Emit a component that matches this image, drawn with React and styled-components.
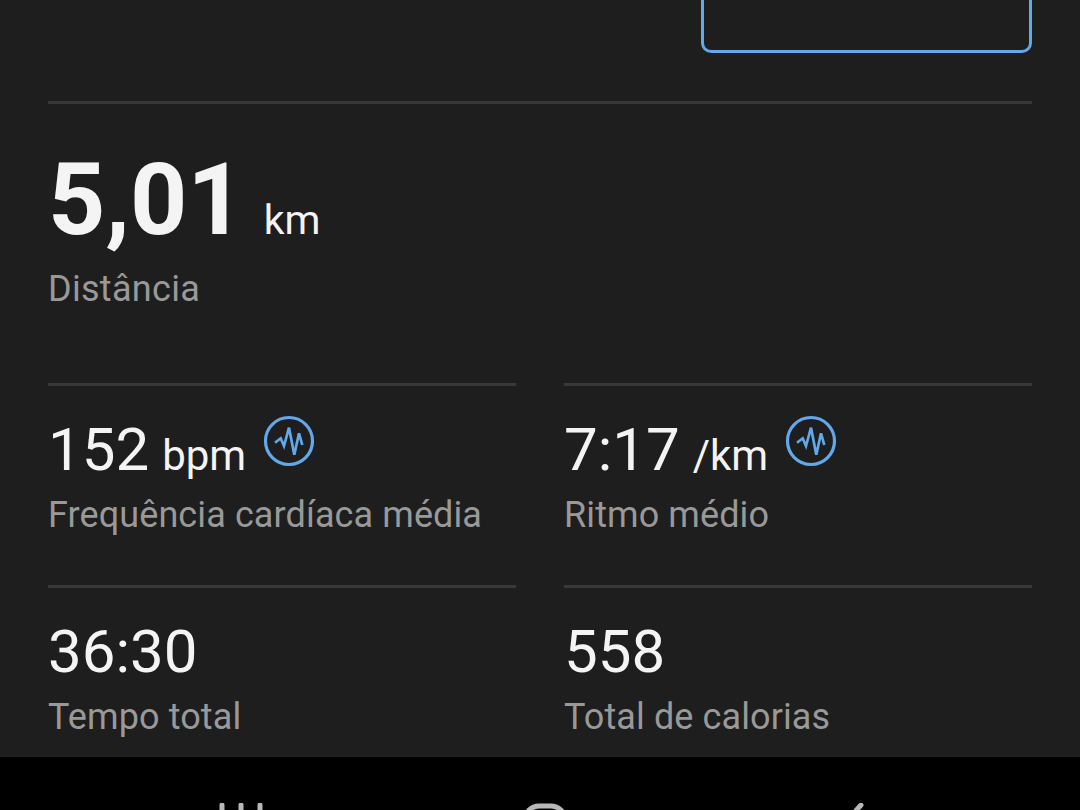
import React from "react";
import styled, { createGlobalStyle } from "styled-components";

const GlobalStyle = createGlobalStyle`
  html, body {
    margin: 0;
    padding: 0;
    background: #000;
  }
`;

const Screen = styled.div`
  width: 1080px;
  height: 810px;
  overflow: hidden;
  display: flex;
  flex-direction: column;
  background: #1e1e1e;
  font-family: Roboto, "Liberation Sans", sans-serif;
`;

const Content = styled.main`
  flex: 1;
  min-height: 0;
  overflow: hidden;
  padding: 0 48px;
`;

const TopRow = styled.div`
  display: flex;
  justify-content: flex-end;
  margin-bottom: 48px;
`;

const OutlineButton = styled.div`
  width: 331px;
  height: 53px;
  box-sizing: border-box;
  border: 3px solid #62a8ea;
  border-top: none;
  border-radius: 0 0 10px 10px;
`;

const Divider = styled.div`
  height: 3px;
  background: #383838;
`;

const Hero = styled.section`
  margin-top: 48px;
  padding-bottom: 73px;
`;

const HeroValue = styled.div`
  display: flex;
  align-items: baseline;
  gap: 19px;
  height: 96px;
  line-height: 96px;
  color: #f4f4f4;
`;

const BigNumber = styled.span`
  font-size: 100px;
  font-weight: 700;
`;

const Unit = styled.span`
  font-size: 41px;
  color: #f4f4f4;
`;

const Label = styled.div`
  font-size: 36px;
  letter-spacing: 0.1px;
  line-height: 42px;
  color: #999;
  white-space: nowrap;
`;

const HeroLabel = styled(Label)`
  margin-top: 20px;
  letter-spacing: 0.3px;
`;

const StatGrid = styled.section`
  display: grid;
  grid-template-columns: 468px 468px;
  column-gap: 48px;
`;

const Stat = styled.div`
  height: 199px;
  box-sizing: border-box;
  padding-top: 30px;
`;

const StatValue = styled.div`
  display: flex;
  align-items: baseline;
  height: 68px;
  line-height: 68px;
  margin-bottom: 10px;
  color: #f4f4f4;
`;

const Number = styled.span`
  font-size: 60px;
`;

const StatUnit = styled.span`
  font-size: 42px;
  margin-left: 13px;
`;

const Badge = styled.svg`
  width: 52px;
  height: 52px;
  margin-left: 16.5px;
  align-self: flex-start;
  margin-top: -1px;
`;

const NavBar = styled.nav`
  height: 53px;
  flex-shrink: 0;
  overflow: hidden;
  background: #000;
  position: relative;
`;

const NavIcon = styled.svg`
  position: absolute;
  top: 46px;
  left: ${(p) => p.$left}px;
  width: 60px;
  height: 60px;
  fill: none;
  stroke: #b8b8b8;
  stroke-width: 5;
  stroke-linecap: round;
`;

function PulseBadge() {
  return (
    <Badge viewBox="0 0 52 52">
      <circle cx="26" cy="26" r="23.5" fill="none" stroke="#62a8ea" strokeWidth="3.2" />
      <path
        d="M12 27.7 L17.7 23.3 L21 31 L26 12.7 L31.3 39.7 L36 18.3 L39.3 30"
        fill="none"
        stroke="#62a8ea"
        strokeWidth="2.7"
        strokeLinejoin="miter"
      />
    </Badge>
  );
}

const stats = [
  { value: "152", unit: "bpm", label: "Frequência cardíaca média", badge: true },
  { value: "7:17", unit: "/km", label: "Ritmo médio", badge: true },
  { value: "36:30", label: "Tempo total" },
  { value: "558", label: "Total de calorias" },
];

export default function App() {
  return (
    <Screen>
      <GlobalStyle />
      <Content>
        <TopRow>
          <OutlineButton />
        </TopRow>
        <Divider />
        <Hero>
          <HeroValue>
            <BigNumber>5,01</BigNumber>
            <Unit>km</Unit>
          </HeroValue>
          <HeroLabel>Distância</HeroLabel>
        </Hero>
        <StatGrid>
          {stats.map((s) => (
            <div key={s.label}>
              <Divider />
              <Stat>
                <StatValue>
                  <Number>{s.value}</Number>
                  {s.unit && <StatUnit>{s.unit}</StatUnit>}
                  {s.badge && <PulseBadge />}
                </StatValue>
                <Label>{s.label}</Label>
              </Stat>
            </div>
          ))}
        </StatGrid>
      </Content>
      <NavBar>
        <NavIcon $left={210} viewBox="0 0 60 60">
          <path d="M12 2V40M31 2V40M50 2V40" />
        </NavIcon>
        <NavIcon $left={515} viewBox="0 0 60 60">
          <rect x="10" y="3" width="40" height="40" rx="14" />
        </NavIcon>
        <NavIcon $left={825} viewBox="0 0 60 60">
          <path d="M36 2L20 20L36 38" />
        </NavIcon>
      </NavBar>
    </Screen>
  );
}
